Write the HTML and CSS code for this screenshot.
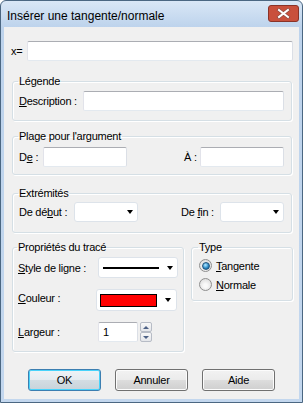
FILE: index.html
```html
<!DOCTYPE html>
<html>
<head>
  <title>Insérer une tangente/normale</title>
  <link rel="stylesheet" href="styles.css">
</head>
<body>
  <div class="window">
    <div class="titlebar">
      <span class="title">Insérer une tangente/normale</span>
      <div class="close">
        <svg width="15" height="11" viewBox="0 0 15 11">
          <path d="M3 2 L12 9 M12 2 L3 9" stroke="#8a4a42" stroke-width="3.4" stroke-linecap="square"/>
          <path d="M3 2 L12 9 M12 2 L3 9" stroke="#fff" stroke-width="2" stroke-linecap="square"/>
        </svg>
      </div>
    </div>

    <div class="client">
      <div class="xrow">
        <span class="xlabel">x=</span>
        <span class="field xfield"></span>
      </div>

      <fieldset class="group legende">
        <legend>Légende</legend>
        <div class="row">
          <span class="label"><u>D</u>escription :</span>
          <span class="field desc"></span>
        </div>
      </fieldset>

      <fieldset class="group plage">
        <legend>Plage pour l'argument</legend>
        <div class="row split">
          <div class="pair">
            <span class="label lbl-de">D<u>e</u> :</span>
            <span class="field range"></span>
          </div>
          <div class="pair">
            <span class="label lbl-a">À :</span>
            <span class="field range"></span>
          </div>
        </div>
      </fieldset>

      <fieldset class="group extremites">
        <legend>Extrémités</legend>
        <div class="row split">
          <div class="pair">
            <span class="label lbl-debut">De dé<u>b</u>ut :</span>
            <span class="combo end"><span class="arrow"></span></span>
          </div>
          <div class="pair">
            <span class="label lbl-fin">De <u>f</u>in :</span>
            <span class="combo end"><span class="arrow"></span></span>
          </div>
        </div>
      </fieldset>

      <div class="bottom">
        <fieldset class="group props">
          <legend>Propriétés du tracé</legend>
          <div class="row prop-style">
            <span class="label"><u>S</u>tyle de ligne :</span>
            <span class="combo style-combo"><span class="line"></span><span class="arrow"></span></span>
          </div>
          <div class="row prop-color">
            <span class="label"><u>C</u>ouleur :</span>
            <span class="combo color-combo"><span class="swatch"></span><span class="arrow"></span></span>
          </div>
          <div class="row prop-width">
            <span class="label"><u>L</u>argeur :</span>
            <span class="field width-field">1</span>
            <span class="spin">
              <span class="spin-btn"><span class="up"></span></span>
              <span class="spin-btn"><span class="down"></span></span>
            </span>
          </div>
        </fieldset>

        <fieldset class="group type">
          <legend>Type</legend>
          <div class="radio-row">
            <span class="radio checked"></span>
            <span><u>T</u>angente</span>
          </div>
          <div class="radio-row">
            <span class="radio"></span>
            <span><u>N</u>ormale</span>
          </div>
        </fieldset>
      </div>

      <div class="buttons">
        <span class="btn default">OK</span>
        <span class="btn">Annuler</span>
        <span class="btn">Aide</span>
      </div>
    </div>
  </div>
</body>
</html>
```

FILE: styles.css
```css
body {
  margin: 0;
  padding: 0;
  font-family: "Liberation Sans", Arial, sans-serif;
  font-size: 11px;
  letter-spacing: -0.25px;
  color: #000;
  background: #fff;
}

.window {
  width: 303px;
  height: 403px;
  box-sizing: border-box;
  border: 1px solid #4b6782;
  border-radius: 6px 6px 0 0;
  background: linear-gradient(#d9e7f6, #bdd3ec 26px, #c3d7ee);
  padding: 0 3px 3px;
  display: flex;
  flex-direction: column;
}

/* title bar */
.titlebar {
  height: 26px;
  display: flex;
  align-items: flex-start;
  justify-content: space-between;
  padding: 4px 0 0 3px;
  box-sizing: border-box;
}

.title {
  font-size: 12px;
  letter-spacing: 0;
  line-height: 16px;
  margin-top: 3px;
}

.close {
  width: 31px;
  height: 17px;
  box-sizing: border-box;
  border: 1px solid #8a3328;
  border-radius: 3px;
  background: #c9503c;
  display: flex;
  align-items: center;
  justify-content: center;
}

/* client area */
.client {
  flex: 1;
  background: #f0f0f0;
  padding: 0 7px 0 8px;
  display: flex;
  flex-direction: column;
}

.field,
.combo {
  box-sizing: border-box;
  height: 20px;
  background: #fff;
  border: 1px solid #e3e9ef;
  border-top-color: #abadb3;
  border-left-color: #e2e3ea;
  border-right-color: #dbdfe6;
  border-radius: 2px;
}

.xrow {
  display: flex;
  align-items: center;
  margin: 14px -1px 0 -1px;
}

.xlabel {
  width: 16px;
}

.xfield {
  flex: 1;
}

/* group boxes */
.group {
  margin: 0;
  border: 1px solid #d5dfe5;
  border-radius: 3px;
  box-shadow: inset 1px 1px 0 #fff, 1px 1px 0 #fff;
  padding: 3px 7px 9px 6px;
  min-width: 0;
}

.group legend {
  padding: 0 1px;
  margin-left: -1px;
  line-height: 13px;
}

.row {
  display: flex;
  align-items: center;
}

.legende {
  margin-top: 14px;
}

.desc {
  width: 201px;
  margin-left: auto;
}

.plage {
  margin-top: 9px;
  padding-top: 4px;
  padding-bottom: 7px;
}

.split {
  justify-content: space-between;
}

.pair {
  display: flex;
  align-items: center;
}

.range {
  width: 84px;
}

.lbl-de {
  width: 24px;
}

.lbl-a {
  width: 16px;
}

.extremites {
  margin-top: 12px;
  padding-top: 2px;
  padding-bottom: 10px;
}

.lbl-debut {
  width: 55px;
}

.lbl-fin {
  width: 39px;
}

.combo {
  display: flex;
  align-items: center;
  border-color: #dde3ea;
  border-radius: 3px;
}

.combo.end {
  width: 64px;
  justify-content: flex-end;
  padding-right: 4px;
}

.arrow {
  width: 0;
  height: 0;
  border-left: 3.5px solid transparent;
  border-right: 3.5px solid transparent;
  border-top: 4px solid #000;
}

/* bottom area */
.bottom {
  display: flex;
  align-items: flex-start;
  margin-top: 8px;
}

.props {
  width: 172px;
  box-sizing: border-box;
  padding: 3px 4px 9px 5px;
}

.props .label {
  width: 80px;
}

.style-combo {
  height: 21px;
  width: 80px;
  padding: 0 4px 0 4px;
  justify-content: space-between;
}

.line {
  width: 56px;
  height: 2px;
  background: #000;
}

.prop-color {
  margin-top: 11px;
}

.prop-color .label {
  width: 78px;
  margin-top: -4px;
}

.color-combo {
  height: 22px;
  width: 81px;
  padding: 0 5px 0 3px;
  justify-content: space-between;
}

.swatch {
  width: 57px;
  height: 13px;
  box-sizing: border-box;
  border: 1px solid #000;
  background: #ff0000;
}

.prop-width {
  margin-top: 11px;
}

.width-field {
  width: 40px;
  padding-left: 4px;
  line-height: 18px;
}

.spin {
  display: flex;
  flex-direction: column;
  margin-left: 2px;
}

.spin-btn {
  width: 12px;
  height: 10px;
  box-sizing: border-box;
  border: 1px solid #b7bcc6;
  border-radius: 2px;
  background: linear-gradient(#f8f8f8, #e4e6ea);
  display: flex;
  align-items: center;
  justify-content: center;
}

.up {
  border-left: 3px solid transparent;
  border-right: 3px solid transparent;
  border-bottom: 3px solid #4d6185;
}

.down {
  border-left: 3px solid transparent;
  border-right: 3px solid transparent;
  border-top: 3px solid #4d6185;
}

.type {
  width: 102px;
  box-sizing: border-box;
  margin-left: 7px;
  margin-right: -1px;
  padding: 2px 6px 6px 7px;
}

.radio-row {
  display: flex;
  align-items: center;
  height: 19px;
  gap: 4px;
}

.radio {
  width: 13px;
  height: 13px;
  box-sizing: border-box;
  border-radius: 50%;
  border: 1px solid #8f8f8f;
  background: radial-gradient(circle at 50% 60%, #fafafa 20%, #d4d4d4 100%);
  display: flex;
  align-items: center;
  justify-content: center;
}

.radio.checked::after {
  content: "";
  width: 6px;
  height: 6px;
  border-radius: 50%;
  border: 1px solid #24547c;
  background: radial-gradient(circle at 40% 35%, #9fdcfb 10%, #2b8bc6 55%, #0f4d7d 100%);
}

/* dialog buttons */
.buttons {
  display: flex;
  justify-content: center;
  gap: 14px;
  margin-top: 17px;
  padding-right: 1px;
}

.btn {
  width: 73px;
  height: 22px;
  box-sizing: border-box;
  border: 1px solid #707070;
  border-radius: 3px;
  background: linear-gradient(#f2f2f2, #ebebeb 50%, #dddddd 50%, #cfcfcf);
  box-shadow: inset 0 0 0 1px #fcfcfc;
  display: flex;
  align-items: center;
  justify-content: center;
}

.btn.default {
  border-color: #3c7fb1;
  box-shadow: inset 0 0 0 1px #48d3fb;
  background: linear-gradient(#eef3f6, #e4ebf0 50%, #d3dde3 50%, #c7d3da);
}
```
